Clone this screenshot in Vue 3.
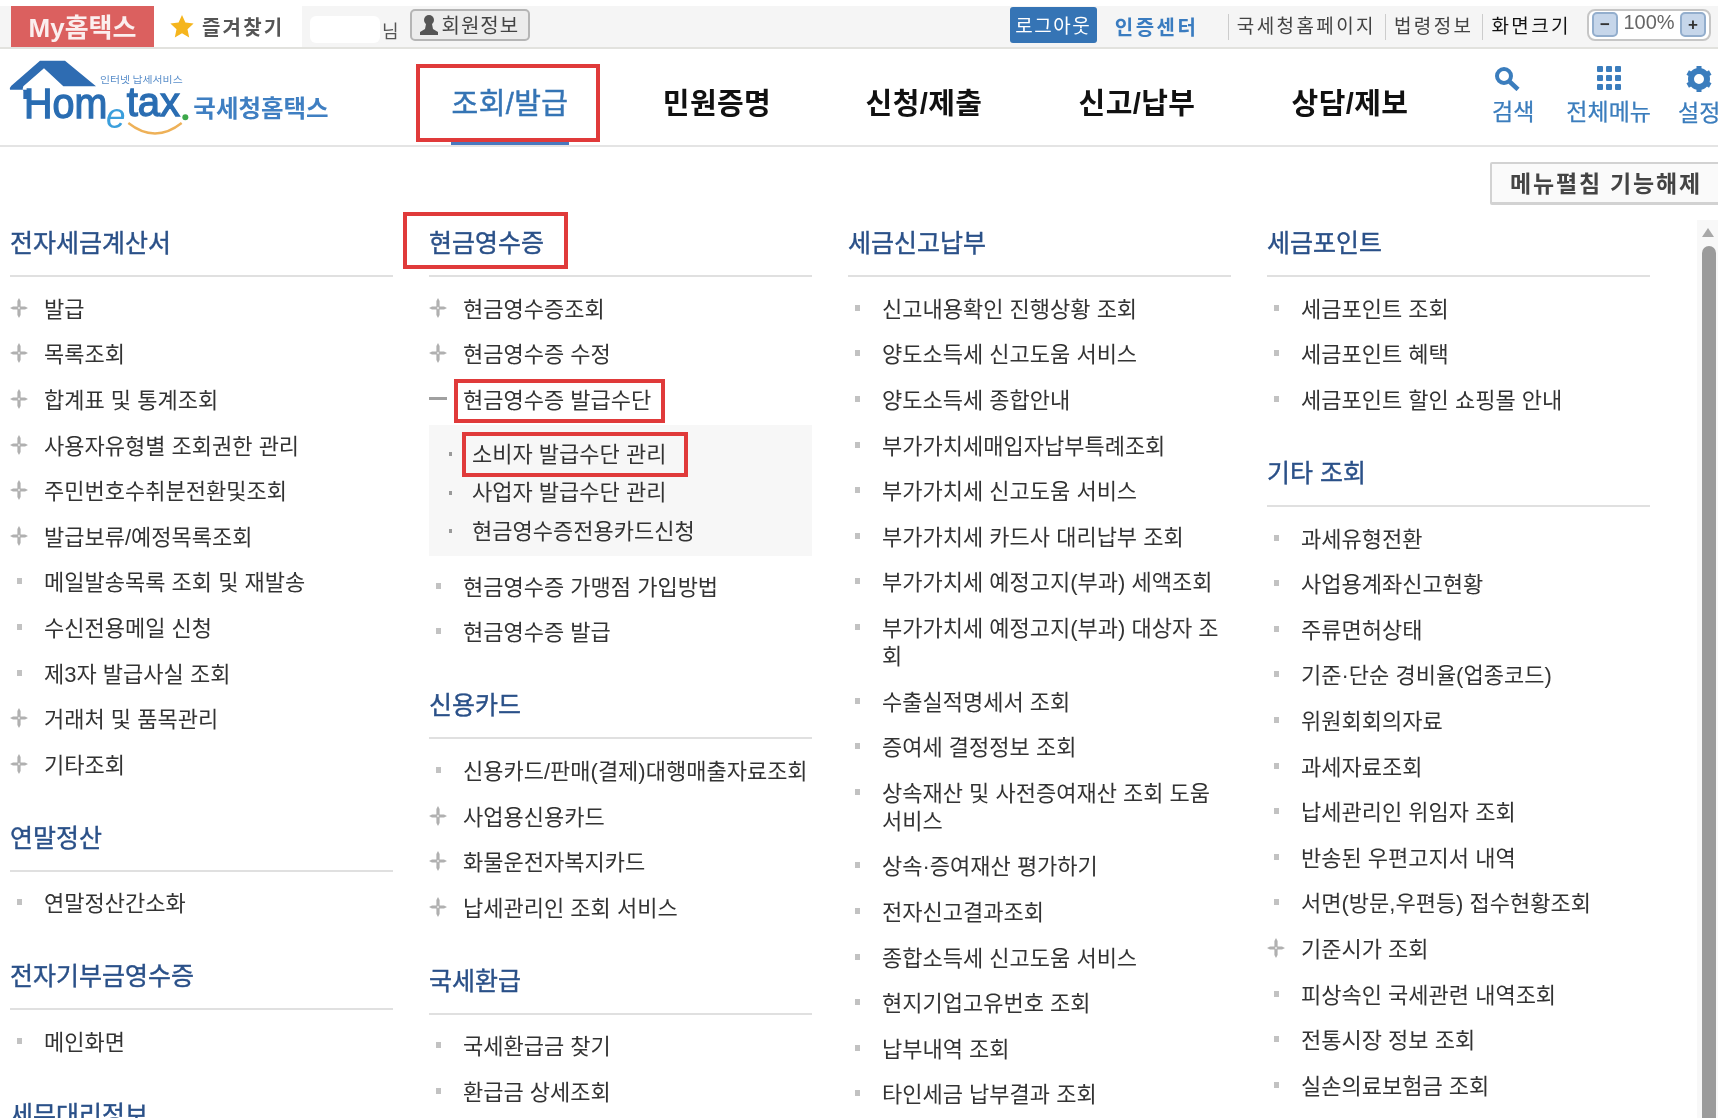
<script setup>
const navItems = [
  { t: '조회/발급', active: true },
  { t: '민원증명' },
  { t: '신청/제출' },
  { t: '신고/납부' },
  { t: '상담/제보' },
]
const p = (t, extra = {}) => ({ t, icon: 'plus', ...extra })
const d = (t, extra = {}) => ({ t, icon: 'dot', ...extra })
const columns = [
  [
    { title: '전자세금계산서', items: [p('발급'), p('목록조회'), p('합계표 및 통계조회'), p('사용자유형별 조회권한 관리'), p('주민번호수취분전환및조회'), p('발급보류/예정목록조회'), d('메일발송목록 조회 및 재발송'), d('수신전용메일 신청'), d('제3자 발급사실 조회'), p('거래처 및 품목관리'), p('기타조회')] },
    { title: '연말정산', items: [d('연말정산간소화')] },
    { title: '전자기부금영수증', items: [d('메인화면')] },
    { title: '세무대리정보', items: [] },
  ],
  [
    {
      title: '현금영수증', mark: true,
      items: [
        p('현금영수증조회'), p('현금영수증 수정'),
        { t: '현금영수증 발급수단', icon: 'minus', mark: 'mark-a', sub: [
          { t: '소비자 발급수단 관리', mark: true },
          { t: '사업자 발급수단 관리' },
          { t: '현금영수증전용카드신청' },
        ] },
        d('현금영수증 가맹점 가입방법'), d('현금영수증 발급'),
      ],
    },
    { title: '신용카드', items: [d('신용카드/판매(결제)대행매출자료조회'), p('사업용신용카드'), p('화물운전자복지카드'), p('납세관리인 조회 서비스')] },
    { title: '국세환급', items: [d('국세환급금 찾기'), d('환급금 상세조회')] },
  ],
  [
    { title: '세금신고납부', items: ['신고내용확인 진행상황 조회', '양도소득세 신고도움 서비스', '양도소득세 종합안내', '부가가치세매입자납부특례조회', '부가가치세 신고도움 서비스', '부가가치세 카드사 대리납부 조회', '부가가치세 예정고지(부과) 세액조회', '부가가치세 예정고지(부과) 대상자 조회', '수출실적명세서 조회', '증여세 결정정보 조회', '상속재산 및 사전증여재산 조회 도움 서비스', '상속·증여재산 평가하기', '전자신고결과조회', '종합소득세 신고도움 서비스', '현지기업고유번호 조회', '납부내역 조회', '타인세금 납부결과 조회'].map((t) => d(t)) },
  ],
  [
    { title: '세금포인트', items: ['세금포인트 조회', '세금포인트 혜택', '세금포인트 할인 쇼핑몰 안내'].map((t) => d(t)) },
    { title: '기타 조회', items: [d('과세유형전환'), d('사업용계좌신고현황'), d('주류면허상태'), d('기준·단순 경비율(업종코드)'), d('위원회회의자료'), d('과세자료조회'), d('납세관리인 위임자 조회'), d('반송된 우편고지서 내역'), d('서면(방문,우편등) 접수현황조회'), p('기준시가 조회'), d('피상속인 국세관련 내역조회'), d('전통시장 정보 조회'), d('실손의료보험금 조회')] },
  ],
]
</script>

<template>
  <div class="page">
    <header class="topbar">
      <a class="my">My홈택스</a>
      <a class="fav">
        <svg width="24" height="23" viewBox="0 0 24 23"><polygon points="12,0 15.4,7.6 23.6,8.6 17.5,14.2 19.2,22.4 12,18.3 4.8,22.4 6.5,14.2 0.4,8.6 8.6,7.6" fill="#f5b51d" /></svg>
        <span>즐겨찾기</span>
      </a>
      <span class="name-blank"></span>
      <span class="nim">님</span>
      <button class="member">
        <svg width="18" height="21" viewBox="0 0 18 21"><circle cx="9" cy="6" r="5" fill="#555" /><path d="M6 10 L12 10 L13 15 L18 18 L18 21 L0 21 L0 18 L5 15 Z" fill="#555" /></svg>
        <span>회원정보</span>
      </button>
      <div class="top-right">
        <a class="logout">로그아웃</a>
        <a class="cert">인증센터</a>
        <a class="tlink first">국세청홈페이지</a>
        <a class="tlink">법령정보</a>
        <a class="tlink dark">화면크기</a>
        <div class="zoomer">
          <span class="zbtn">−</span>
          <span class="zval">100%</span>
          <span class="zbtn">+</span>
        </div>
      </div>
    </header>

    <nav class="nav">
      <svg class="logo" width="340" height="95" viewBox="0 0 1020 285">
        <path d="M120 35 H195 L288 112 H190 L132 58 L70 112 Q66 122 70 126 V150 H84 V122 H56 L30 122 Q28 116 34 110 Z" fill="#2e6cb2" />
        <text x="300" y="102" font-size="29" fill="#5b8fca" textLength="248" lengthAdjust="spacingAndGlyphs" font-family="'Noto Sans CJK KR',sans-serif">인터넷 납세서비스</text>
        <text x="72" y="206" font-size="128" fill="#2a6db2" stroke="#2a6db2" stroke-width="4" textLength="250" lengthAdjust="spacingAndGlyphs" font-family="'Liberation Sans',sans-serif">Hom</text>
        <text x="318" y="236" font-size="105" font-style="italic" fill="#3b9fdc" font-family="'Liberation Sans',sans-serif">e</text>
        <text x="380" y="201" font-size="122" fill="#2a6db2" stroke="#2a6db2" stroke-width="4" textLength="160" lengthAdjust="spacingAndGlyphs" font-family="'Liberation Sans',sans-serif">tax</text>
        <circle cx="556" cy="205" r="9" fill="#3da84a" />
        <path d="M385 222 Q465 285 545 222" fill="none" stroke="#eeb158" stroke-width="7" />
        <text x="580" y="203" font-size="70" font-weight="700" fill="#3f7fc2" textLength="406" lengthAdjust="spacingAndGlyphs" font-family="'Noto Sans CJK KR',sans-serif">국세청홈택스</text>
      </svg>
      <ul class="menu">
        <li v-for="n in navItems" :key="n.t" class="menu-item" :class="{ active: n.active }">
          <span class="menu-label">{{ n.t }}</span>
        </li>
      </ul>
      <div class="tools">
        <a class="tool">
          <svg class="shift" width="26" height="25" viewBox="0 0 26 25"><circle cx="10" cy="10" r="7" fill="none" stroke="#3b7dbd" stroke-width="4" /><path d="M15.5 15.5 L24 23.5" stroke="#3b7dbd" stroke-width="4.5" /></svg>
          <span>검색</span>
        </a>
        <a class="tool">
          <svg width="26" height="25" viewBox="0 0 26 25" fill="#3b7dbd">
            <template v-for="y in [0, 9, 18]" :key="y">
              <rect v-for="x in [1, 10, 19]" :key="x" :x="x" :y="y" width="6" height="6" rx="1" />
            </template>
          </svg>
          <span>전체메뉴</span>
        </a>
        <a class="tool">
          <svg width="26" height="26" viewBox="0 0 26 26"><circle cx="13" cy="13" r="8" fill="none" stroke="#3b7dbd" stroke-width="6" /><path d="M13 0V26M1.7 6.5L24.3 19.5M1.7 19.5L24.3 6.5" stroke="#3b7dbd" stroke-width="5" stroke-dasharray="4 18 4" /></svg>
          <span>설정</span>
        </a>
      </div>
    </nav>

    <main class="main">
      <div class="action-row">
        <button class="fold-btn">메뉴펼침 기능해제</button>
      </div>
      <div class="grid">
        <div v-for="(col, ci) in columns" :key="ci" class="col">
          <section v-for="s in col" :key="s.title" class="section">
            <h2 class="sec-title"><span :class="{ 'box box-h': s.mark }">{{ s.title }}</span></h2>
            <ul v-if="s.items.length" class="list">
              <template v-for="it in s.items" :key="it.t">
                <li class="row">
                  <span class="ico">
                    <svg v-if="it.icon === 'plus'" width="18" height="20" viewBox="0 0 18 20"><path d="M9 0 L10.6 3 V8.4 H15 L18 10 L15 11.6 H10.6 V17 L9 20 L7.4 17 V11.6 H3 L0 10 L3 8.4 H7.4 V3 Z" fill="#b0b0b0" /><circle cx="9" cy="10" r="1.2" fill="#e2e2e2" /></svg>
                    <i v-else-if="it.icon === 'minus'" class="minus"></i>
                    <i v-else class="dot"></i>
                  </span>
                  <span class="txt"><span :class="{ 'box box-a': it.mark }">{{ it.t }}</span></span>
                </li>
                <li v-if="it.sub" class="subwrap">
                  <ul class="sublist">
                    <li v-for="si in it.sub" :key="si.t" class="subrow">
                      <i class="subdot"></i>
                      <span :class="{ 'box box-s': si.mark }">{{ si.t }}</span>
                    </li>
                  </ul>
                </li>
              </template>
            </ul>
          </section>
        </div>
      </div>
      <div class="scrollbar">
        <i class="arrow"></i>
        <i class="thumb"></i>
      </div>
    </main>
  </div>
</template>

<style scoped>
.page {
  position: relative;
  width: 1718px;
  height: 1118px;
  overflow: hidden;
  padding-top: 6px;
  box-sizing: border-box;
  background: #fff;
  color: #333;
  font-family: "Liberation Sans", "Noto Sans CJK KR", sans-serif;
  filter: blur(0.6px);
}
ul { list-style: none; margin: 0; padding: 0; }
a { display: block; }

.topbar {
  display: flex;
  align-items: center;
  height: 41px;
  padding-left: 11px;
  background: #f5f5f5;
  border-bottom: 2px solid #e2e2de;
}
.my {
  width: 143px;
  height: 41px;
  line-height: 44px;
  background: #db605f;
  color: #fbeeee;
  font-size: 26px;
  font-weight: 700;
  text-align: center;
}
.fav {
  display: flex;
  align-items: center;
  gap: 8px;
  width: 148px;
  height: 41px;
  padding-left: 16px;
  box-sizing: border-box;
  background: #fff;
  color: #555;
  font-size: 20px;
  font-weight: 700;
  letter-spacing: 2.2px;
}
.name-blank {
  width: 70px;
  height: 27px;
  margin: 6px 0 0 8px;
  background: #fff;
  border-radius: 6px;
}
.nim {
  margin: 6px 0 0 2px;
  font-size: 18px;
  color: #555;
}
.member {
  display: flex;
  align-items: center;
  gap: 4px;
  width: 120px;
  height: 32px;
  margin: -4px 0 0 11px;
  padding: 0 0 0 8px;
  box-sizing: border-box;
  background: #ececec;
  border: 2px solid #b5b5b5;
  border-radius: 5px;
  color: #444;
  font-family: inherit;
  font-size: 20px;
  letter-spacing: 1px;
}
.top-right {
  display: flex;
  align-items: center;
  margin-left: auto;
}
.logout {
  width: 87px;
  height: 36px;
  margin-top: -3px;
  line-height: 39px;
  text-align: center;
  background: #3574b5;
  border-radius: 3px;
  color: #fff;
  font-size: 19px;
  letter-spacing: 1.5px;
}
.cert {
  width: 131px;
  padding-left: 18px;
  box-sizing: border-box;
  color: #3a7cc0;
  font-size: 20px;
  font-weight: 700;
  letter-spacing: 2.5px;
}
.tlink {
  padding-left: 8px;
  margin-right: 9px;
  border-left: 1px solid #ccc;
  font-size: 19px;
  line-height: 26px;
  letter-spacing: 2.4px;
  color: #444;
}
.tlink.dark { color: #111; margin-right: 16px; }
.zoomer {
  display: flex;
  align-items: center;
  justify-content: space-between;
  width: 124px;
  height: 32px;
  margin: -4px 7px 0 0;
  padding: 0 3px;
  box-sizing: border-box;
  background: #fff;
  border: 2px solid #c6c6c6;
  border-radius: 8px;
}
.zbtn {
  width: 26px;
  height: 25px;
  line-height: 21px;
  text-align: center;
  background: #c6d6ea;
  border: 2px solid #93aecd;
  border-radius: 5px;
  box-sizing: border-box;
  font-size: 17px;
  font-weight: 700;
  color: #333;
}
.zval {
  font-size: 20px;
  color: #666;
  margin-top: -4px;
}

.nav {
  display: flex;
  height: 96px;
  border-bottom: 2px solid #e4e4e4;
}
.logo {
  flex: none;
  width: 340px;
  height: 95px;
}
.menu {
  display: flex;
  gap: 26px;
  margin-left: 76px;
}
.menu-item {
  position: relative;
  width: 184px;
  height: 96px;
  padding-left: 4px;
  box-sizing: border-box;
  text-align: center;
  font-size: 29px;
  font-weight: 700;
  letter-spacing: 0.4px;
  line-height: 110px;
  color: #111;
}
.menu-item:nth-child(2) { margin-left: -3px; }
.menu-item:nth-child(3) { margin-left: -3px; }
.menu-item:nth-child(4) { margin-left: 3px; }
.menu-item:nth-child(5) { margin-left: 3px; }
.menu-item.active {
  color: #3574b5;
  font-weight: 400;
  -webkit-text-stroke: 0.5px #3574b5;
}
.menu-item.active::before {
  content: "";
  position: absolute;
  left: 35px;
  right: 31px;
  bottom: 0;
  height: 4px;
  background: #4a78bd;
}
.menu-item.active::after {
  content: "";
  position: absolute;
  left: 0;
  right: 0;
  top: 15px;
  bottom: 3px;
  border: 4px solid #e03a3a;
}
.tools {
  display: flex;
  gap: 30px;
  margin-left: 52px;
  padding-top: 17px;
}
.tool {
  display: flex;
  flex: none;
  flex-direction: column;
  align-items: center;
  gap: 5px;
  color: #3b7dbd;
  font-size: 23px;
  line-height: 32px;
  -webkit-text-stroke: 0.25px #3b7dbd;
}
.tool:nth-child(1) { margin-right: 2px; }
.tool:nth-child(2) { margin-right: -3px; }
.shift { margin-left: -12px; }

.main {
  position: relative;
  padding: 15px 0 0 10px;
}
.action-row {
  display: flex;
  justify-content: flex-end;
  margin: 0 -4px 7px 0;
}
.fold-btn {
  width: 232px;
  height: 43px;
  background: #fafafa;
  border: 2px solid #d2d2d2;
  border-bottom-width: 3px;
  border-radius: 2px;
  padding: 0 0 3px 0;
  font-family: inherit;
  font-size: 23px;
  font-weight: 700;
  letter-spacing: 1.8px;
  color: #444;
}
.grid {
  display: grid;
  grid-template-columns: repeat(4, 383px);
  gap: 36px;
  align-items: start;
}
.section { margin-bottom: 20px; }
.sec-title {
  height: 63px;
  margin: 0;
  border-bottom: 2px solid #e0e0e0;
  font-size: 25px;
  font-weight: 400;
  line-height: 62px;
  color: #2a5088;
  -webkit-text-stroke: 0.4px #2a5088;
}
.list { padding-top: 8px; }
.row {
  display: flex;
  padding: 8.8px 0 6.8px;
  font-size: 22px;
  line-height: 28px;
  color: #333;
}
.ico {
  display: flex;
  flex: none;
  align-items: center;
  width: 34px;
  height: 28px;
}
.txt {
  min-width: 0;
  padding: 2px 2px 0 0;
  word-break: break-word;
  overflow-wrap: anywhere;
}
.dot {
  display: block;
  width: 5px;
  height: 6px;
  margin-left: 7px;
  background: #c2c2c2;
}
.minus {
  display: block;
  width: 18px;
  height: 3px;
  background: #a0a0a0;
}
.subwrap { margin: 3px 0 7px; }
.sublist {
  padding: 9px 0 7px 20px;
  background: #f7f7f7;
}
.subrow {
  display: flex;
  align-items: center;
  height: 38.4px;
  padding-top: 3px;
  box-sizing: border-box;
  font-size: 22px;
  line-height: 27px;
  color: #333;
}
.subdot {
  display: block;
  flex: none;
  width: 3px;
  height: 4px;
  margin-right: 20px;
  background: #9a9a9a;
}
.box { position: relative; display: inline-block; }
.box::after {
  content: "";
  position: absolute;
  border: 4px solid #e03a3a;
  pointer-events: none;
}
.box-h { line-height: 34px; }
.box-h::after { left: -26px; right: -24px; top: -14px; bottom: -9px; }
.box-a::after { left: -9px; right: -14px; top: -8px; bottom: -8px; }
.box-s::after { left: -10px; right: -22px; top: -9px; bottom: -9px; }

.scrollbar {
  position: absolute;
  top: 73px;
  right: 0;
  bottom: 0;
  width: 21px;
  background: #f8f8f8;
}
.arrow {
  position: absolute;
  top: 8px;
  left: 5px;
  border-left: 6px solid transparent;
  border-right: 6px solid transparent;
  border-bottom: 9px solid #a8a8a8;
}
.thumb {
  position: absolute;
  top: 26px;
  left: 5px;
  right: 2px;
  bottom: -10px;
  background: #9b9b9b;
  border-radius: 7px 7px 0 0;
}
</style>
